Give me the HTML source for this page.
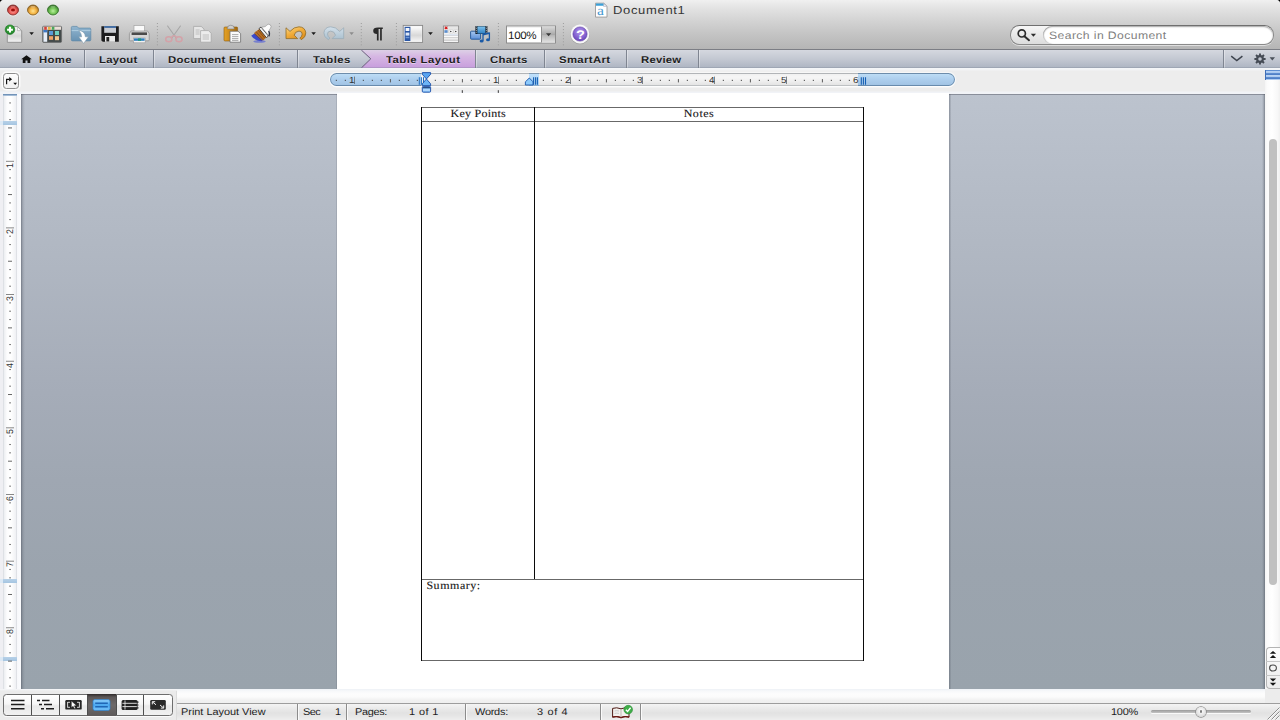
<!DOCTYPE html>
<html><head><meta charset="utf-8"><title>Document1</title>
<style>
html,body{margin:0;padding:0;width:1280px;height:720px;overflow:hidden;background:#000;font-family:"Liberation Sans",sans-serif}
div,svg,span.t{position:absolute}
span.t{white-space:pre;transform-origin:0 0;text-rendering:geometricPrecision}
#win{left:0;top:0;width:1280px;height:720px;overflow:hidden;border-radius:4px 4px 0 0;background:#ededed}
#titlebar{left:0;top:0;width:1280px;height:49px;background:linear-gradient(#f0f0f0 0,#e3e3e3 8px,#d4d4d4 20px,#c4c4c4 34px,#b5b5b5 49px)}
#tbline{left:0;top:49px;width:1280px;height:1px;background:#7c7e85}
#tabs{left:0;top:50px;width:1280px;height:18px;background:linear-gradient(#d5d8df 0,#c3c8d2 50%,#adb4c2 100%)}
.tdiv{top:50px;width:1px;height:18px;background:#7f8591;box-shadow:1px 0 0 rgba(255,255,255,.35)}
#rulerbg{left:0;top:68px;width:1280px;height:26px;background:linear-gradient(#f4f6f9 0,#f2f3f5 2px,#ededed 3px,#ededed 23px,#f1f3f7 24px,#f1f3f7 26px)}
</style></head><body><div id="win">
<div id="titlebar"></div><div id="tbline"></div>
<svg style="left:0;top:0" width="80" height="22" viewBox="0 0 80 22">
<defs>
<radialGradient id="gr" cx=".5" cy=".6" r=".56"><stop offset="0" stop-color="#ffa7a2"/><stop offset=".5" stop-color="#f0645e"/><stop offset=".82" stop-color="#c43e3a"/><stop offset="1" stop-color="#7e2624"/></radialGradient>
<radialGradient id="gy" cx=".5" cy=".6" r=".56"><stop offset="0" stop-color="#ffe392"/><stop offset=".5" stop-color="#f5b748"/><stop offset=".82" stop-color="#cb8d2c"/><stop offset="1" stop-color="#7c5416"/></radialGradient>
<radialGradient id="gg" cx=".5" cy=".6" r=".56"><stop offset="0" stop-color="#b9f09e"/><stop offset=".5" stop-color="#78c85a"/><stop offset=".82" stop-color="#4f9c3c"/><stop offset="1" stop-color="#2c6222"/></radialGradient>
</defs>
<circle cx="13" cy="10.700" r="5.900" fill="rgba(255,255,255,.5)"/><circle cx="33" cy="10.700" r="5.900" fill="rgba(255,255,255,.5)"/><circle cx="53" cy="10.700" r="5.900" fill="rgba(255,255,255,.5)"/>
<ellipse cx="13" cy="10" rx="5.500" ry="5" fill="url(#gr)" stroke="#8a3230" stroke-width=".9"/>
<ellipse cx="33" cy="10" rx="5.500" ry="5" fill="url(#gy)" stroke="#8c6424" stroke-width=".9"/>
<ellipse cx="53" cy="10" rx="5.500" ry="5" fill="url(#gg)" stroke="#3a742e" stroke-width=".9"/>
<ellipse cx="13" cy="10" rx="2" ry="1.500" fill="#9c0c0a"/>
<ellipse cx="13" cy="6.800" rx="2.600" ry="1" fill="rgba(255,255,255,.22)"/><ellipse cx="33" cy="6.800" rx="2.600" ry="1" fill="rgba(255,255,255,.25)"/><ellipse cx="53" cy="6.800" rx="2.600" ry="1" fill="rgba(255,255,255,.2)"/>
</svg>
<svg style="left:594px;top:2px" width="15" height="17" viewBox="0 0 15 17">
<path d="M1.5 1.2h8.3l3.2 3v10.9h-11.5z" fill="#fff" stroke="#9a9a9a" stroke-width=".9"/>
<path d="M2 1.6h7.6l1.2 1.2v.9h-8.8z" fill="#3aa0d8"/>
<path d="M9.6 1.4l3.3 3.1h-3.3z" fill="#e8eef4" stroke="#aab" stroke-width=".5"/>
</svg>
<span class="t" style="left:597.3px;top:5.06px;font:400 14.5px/14.5px 'Liberation Serif',serif;color:#4496cf;transform:scale(1.08,0.9255);">a</span>
<span class="t" style="left:612.8px;top:5.49px;font:400 12.4px/12.4px 'Liberation Sans',sans-serif;color:#363636;letter-spacing:0.630px;transform:scale(1.05,0.9255);">Document1</span>
<div id="tabs"></div>
<svg style="left:355px;top:50px" width="125" height="18" viewBox="355 50 125 18">
<defs><linearGradient id="pur" x1="0" y1="0" x2="0" y2="1"><stop offset="0" stop-color="#ddd0e6"/><stop offset=".35" stop-color="#d6b7e3"/><stop offset="1" stop-color="#c79ddd"/></linearGradient></defs>
<path d="M361.3 50H475.5V68H361.3L370.8 58.8Z" fill="url(#pur)"/>
<path d="M361.3 50L370.8 58.8L361.3 68" fill="none" stroke="#6b5f7d" stroke-width="1"/>
</svg>
<div class="tdiv" style="left:84.0px"></div>
<div class="tdiv" style="left:152.5px"></div>
<div class="tdiv" style="left:297.0px"></div>
<div class="tdiv" style="left:474.5px"></div>
<div class="tdiv" style="left:543.5px"></div>
<div class="tdiv" style="left:625.5px"></div>
<div class="tdiv" style="left:697.5px"></div>
<div class="tdiv" style="left:1223.0px"></div>
<div style="left:0;top:67px;width:1280px;height:1px;background:rgba(120,128,145,.28)"></div>
<svg style="left:21px;top:54.600px" width="11" height="8.500" viewBox="0 0 12 11" preserveAspectRatio="none"><path d="M6 .2L.2 5.600h1.700v5.200h3V7.200h2.200v3.600h3V5.600h1.700z" fill="#111"/></svg>
<span class="t" style="left:38.7px;top:56.00px;font:700 10.6px/10.6px 'Liberation Sans',sans-serif;color:#1e1e1e;letter-spacing:0.328px;transform:scale(1.07,0.9255);text-shadow:0 1px 0 rgba(255,255,255,.45);">Home</span>
<span class="t" style="left:99.2px;top:56.00px;font:700 10.6px/10.6px 'Liberation Sans',sans-serif;color:#1e1e1e;letter-spacing:0.192px;transform:scale(1.07,0.9255);text-shadow:0 1px 0 rgba(255,255,255,.45);">Layout</span>
<span class="t" style="left:168.2px;top:56.00px;font:700 10.6px/10.6px 'Liberation Sans',sans-serif;color:#1e1e1e;letter-spacing:0.243px;transform:scale(1.07,0.9255);text-shadow:0 1px 0 rgba(255,255,255,.45);">Document Elements</span>
<span class="t" style="left:312.8px;top:56.00px;font:700 10.6px/10.6px 'Liberation Sans',sans-serif;color:#1e1e1e;letter-spacing:0.424px;transform:scale(1.07,0.9255);text-shadow:0 1px 0 rgba(255,255,255,.45);">Tables</span>
<span class="t" style="left:386.2px;top:56.00px;font:700 10.6px/10.6px 'Liberation Sans',sans-serif;color:#1e1e1e;letter-spacing:0.414px;transform:scale(1.07,0.9255);text-shadow:0 1px 0 rgba(255,255,255,.45);">Table Layout</span>
<span class="t" style="left:490.2px;top:56.00px;font:700 10.6px/10.6px 'Liberation Sans',sans-serif;color:#1e1e1e;letter-spacing:0.279px;transform:scale(1.07,0.9255);text-shadow:0 1px 0 rgba(255,255,255,.45);">Charts</span>
<span class="t" style="left:559.2px;top:56.00px;font:700 10.6px/10.6px 'Liberation Sans',sans-serif;color:#1e1e1e;letter-spacing:0.337px;transform:scale(1.07,0.9255);text-shadow:0 1px 0 rgba(255,255,255,.45);">SmartArt</span>
<span class="t" style="left:641.2px;top:56.00px;font:700 10.6px/10.6px 'Liberation Sans',sans-serif;color:#1e1e1e;letter-spacing:0.207px;transform:scale(1.07,0.9255);text-shadow:0 1px 0 rgba(255,255,255,.45);">Review</span>
<svg style="left:1226px;top:50px" width="54" height="18" viewBox="1226 50 54 18">
<path d="M1231.2 56.2l5.6 4.3 5.6-4.3" fill="none" stroke="#3e444e" stroke-width="1.5"/>
<g fill="#454b55"><circle cx="1260" cy="59" r="3.9"/>
<g stroke="#454b55" stroke-width="1.9"><path d="M1260 53.4v11.2M1254.4 59h11.2M1256 55l8 8M1264 55l-8 8"/></g></g>
<circle cx="1260" cy="59" r="1.8" fill="#c0c5cf"/>
<path d="M1269.6 57.3h5.4l-2.7 3.2z" fill="#4a505a"/>
</svg>
<svg style="left:0;top:20px" width="1000" height="29" viewBox="0 20 1000 29">
<defs>
<linearGradient id="pg" x1="0" y1="0" x2="0" y2="1"><stop offset="0" stop-color="#fdfdfd"/><stop offset=".6" stop-color="#d8d8d8"/><stop offset="1" stop-color="#f4f4f4"/></linearGradient>
<radialGradient id="grn" cx=".5" cy=".4" r=".6"><stop offset="0" stop-color="#58c04c"/><stop offset="1" stop-color="#177a25"/></radialGradient>
<linearGradient id="fold" x1="0" y1="0" x2="0" y2="1"><stop offset="0" stop-color="#92b6d0"/><stop offset="1" stop-color="#6892b2"/></linearGradient>
<linearGradient id="und" x1="0" y1="0" x2=".6" y2="1"><stop offset="0" stop-color="#fbdc92"/><stop offset=".5" stop-color="#f2ae3c"/><stop offset="1" stop-color="#de8f1e"/></linearGradient>
<linearGradient id="red" x1="0" y1="0" x2="0" y2="1"><stop offset="0" stop-color="#d3e0ea"/><stop offset="1" stop-color="#a9bfce"/></linearGradient>
<linearGradient id="clip" x1="0" y1="0" x2="1" y2="0"><stop offset="0" stop-color="#e4a228"/><stop offset=".5" stop-color="#c98716"/><stop offset="1" stop-color="#a0650c"/></linearGradient>
<radialGradient id="hlp" cx=".5" cy=".35" r=".7"><stop offset="0" stop-color="#b49aee"/><stop offset=".6" stop-color="#8462d0"/><stop offset="1" stop-color="#6440b4"/></radialGradient>
<linearGradient id="cmb" x1="0" y1="0" x2="0" y2="1"><stop offset="0" stop-color="#d9d9d9"/><stop offset=".5" stop-color="#a9a9a9"/><stop offset=".55" stop-color="#b7b7b7"/><stop offset="1" stop-color="#e2e2e2"/></linearGradient>
<linearGradient id="film" x1="0" y1="0" x2="0" y2="1"><stop offset="0" stop-color="#7ec3ee"/><stop offset="1" stop-color="#2f7fc2"/></linearGradient>
<linearGradient id="blu" x1="0" y1="0" x2="0" y2="1"><stop offset="0" stop-color="#a9c8ee"/><stop offset="1" stop-color="#5b8fd8"/></linearGradient>
</defs>
<g><path d="M7.3 26.6h10.2l4.2 4v11.7h-14.4z" fill="url(#pg)" stroke="#8f8f8f" stroke-width=".9"/>
<path d="M17.4 26.7v4h4.2z" fill="#f6f6f6" stroke="#9a9a9a" stroke-width=".6"/>
<circle cx="10" cy="29.700" r="4.800" fill="url(#grn)" stroke="#16761f" stroke-width=".6"/>
<path d="M10 26.800v5.800M7.100 29.700h5.800" stroke="#fff" stroke-width="2"/></g>
<path d="M29.3 32.2h4.6l-2.3 2.9z" fill="#1a1a1a"/>
<g><rect x="42.600" y="26.200" width="19" height="16.200" rx="1.200" fill="#434a4a" stroke="#6b6b6b" stroke-width=".7"/>
<rect x="43.2" y="26.6" width="17.8" height="3.2" fill="#e9ded6"/>
<rect x="44.2" y="26.8" width="2.6" height="3" fill="#d2433c"/><rect x="48" y="26.8" width="2.6" height="3" fill="#e3b24a"/><rect x="51.8" y="26.8" width="2.6" height="3" fill="#4aa85a"/>
<rect x="43.4" y="30" width="3.8" height="11.8" fill="#e8eef8"/><rect x="43.4" y="30" width="3.8" height="2.4" fill="#3f78c4"/>
<rect x="49" y="31" width="4" height="4" fill="#5b9bd8"/><rect x="55" y="31" width="4" height="4" fill="#6fd0c0"/>
<rect x="49" y="36.2" width="4" height="3.6" fill="#f0a368"/><rect x="55" y="36.2" width="4" height="4" fill="#f4c890"/></g>
<g><path d="M71.3 27.6q0-1.2 1.2-1.2h4.6l1.5 1.7h11q1.2 0 1.2 1.2v10.4q0 1.2-1.2 1.2h-17.1q-1.2 0-1.2-1.2z" fill="url(#fold)" stroke="#5f8aa8" stroke-width=".7"/>
<path d="M71.6 30.6h19" stroke="#b8d4e6" stroke-width=".8"/>
<path d="M78.800 30.400q6.200.600 6.600 6.400h3.100l-4.900 6.700-4.900-6.700h2.900q-.300-3.600-2.800-6.400z" fill="#fff" stroke="#7f9aac" stroke-width=".6"/></g>
<g><path d="M101.4 26.2h17.4v15.6h-16l-1.4-1.4z" fill="#1c1c1e"/>
<rect x="104.2" y="26.2" width="11.8" height="6.6" fill="#c9ccd2"/><rect x="104.2" y="26.2" width="11.8" height="1.6" fill="#2b5d9c"/>
<rect x="105" y="36" width="10" height="5.8" fill="#e9e9e9"/><rect x="106.4" y="37" width="2.8" height="4.4" fill="#222"/></g>
<g><rect x="134" y="25.6" width="10.6" height="6.6" fill="#fafafa" stroke="#a5a5a5" stroke-width=".7"/>
<path d="M131 31h16.6l1.6 2.6v6.2q0 1-1 1h-17.8q-1 0-1-1v-6.2z" fill="#d6d6d6" stroke="#8c8c8c" stroke-width=".7"/>
<rect x="131.6" y="32.4" width="15.4" height="2.6" fill="#4a4a4a"/>
<rect x="133.4" y="38" width="11.8" height="4.8" fill="#f2f2f2" stroke="#9a9a9a" stroke-width=".6"/>
<rect x="134" y="38.4" width="10.6" height="2.4" fill="#2e7ec0"/><rect x="138" y="38.4" width="3" height="2.4" fill="#1f9a78"/></g>
<path d="M157.4 23v24" stroke="#9c9c9c" stroke-width="1" stroke-dasharray="1 2.050" fill="none"/>
<g fill="none" stroke-linecap="round"><path d="M167.600 26l8.700 12.200M180.400 26l-8.700 12.200" stroke="#a6a6a6" stroke-width="1.100"/>
<ellipse cx="168.800" cy="39.300" rx="3.100" ry="2.500" stroke="#d3a2a8" stroke-width="1.500"/><ellipse cx="179" cy="39.300" rx="3.100" ry="2.500" stroke="#d3a2a8" stroke-width="1.500"/>
<path d="M171.200 37.600l2.200-2M176.800 37.600l-2.200-2" stroke="#d3a2a8" stroke-width="1.300"/></g>
<g stroke="#a8a8a8" stroke-width=".8"><path d="M193.6 26.4h7.6l2.8 2.6v9.6h-10.4z" fill="#e6e6e6"/>
<path d="M200.6 30.6h7.8l2.8 2.6v9h-10.6z" fill="#ececec"/>
<path d="M202.6 35h6.4M202.6 37h6.4M202.6 39h6.4M195.6 30h4M195.6 32h4M195.6 34h4" stroke="#b4b4b4" stroke-width=".8"/></g>
<g><rect x="224" y="27" width="13.6" height="14" rx="1" fill="url(#clip)" stroke="#8b5a10" stroke-width=".6"/>
<path d="M227.4 28.4q0-3.2 3.4-3.2t3.4 3.2v.6h-6.8z" fill="#cfcfcf" stroke="#7b7b7b" stroke-width=".6"/>
<path d="M230 31.2h8l2.6 2.4v8.6h-10.6z" fill="#fbfbfb" stroke="#6f6f6f" stroke-width=".8"/>
<path d="M232 34.600h6.400M232 36.600h6.400M232 38.600h6.400M232 40.400h6.400" stroke="#a2a2a2" stroke-width=".9"/></g>
<g><ellipse cx="259.500" cy="41.400" rx="6.200" ry="1.400" fill="#4a58d8" opacity=".6"/>
<path d="M251.200 35.800q3 4.600 10.200 5.400l3-2-8.400-6.600z" fill="#3a49cc"/>
<path d="M254 33l5.600-4.200 6.800 8.400-3.400 3.200z" fill="#b86f22"/>
<path d="M256 31.600l7 8M258 30l6.800 8.200M254.600 33.800l6.800 6.600" stroke="#7c4412" stroke-width=".7" fill="none"/>
<path d="M259 28.600l7.400 9 2-1.600-7.400-9z" fill="#f2f2f2" stroke="#2a2a2a" stroke-width=".8"/>
<path d="M261.600 27.200l2.400-.4q1.300 0 2.200-1l.9-1q1.600-1.300 3.200.1 1.400 1.500.3 3.200l-.9 1.200q-.8 1.100-.5 2.400l-.8 3.600z" fill="#fcfcfc" stroke="#8d8d8d" stroke-width=".6"/>
<path d="M268.600 31q1.800 2.600.2 5.400" stroke="#30364a" stroke-width="1.200" fill="none"/></g>
<path d="M279.4 23v24" stroke="#9c9c9c" stroke-width="1" stroke-dasharray="1 2.050" fill="none"/>
<path d="M286 27.800L286 38.600L297.600 38.600L294.200 35.200Q295 31.400 299 31.100Q302.300 31.300 302.200 34.100Q302 36.700 299.800 38.100L301.300 39.700Q306 37.200 305.800 32.800Q305 27 299 26.800Q294 26.800 290 31.400Z" fill="url(#und)" stroke="#8f6a24" stroke-width=".8" stroke-linejoin="round"/>
<path d="M311.3 32.2h4.6l-2.3 2.9z" fill="#1a1a1a"/>
<g transform="translate(629.700 0) scale(-1 1)"><path d="M286 27.800L286 38.600L297.600 38.600L294.200 35.200Q295 31.400 299 31.100Q302.300 31.300 302.200 34.100Q302 36.700 299.800 38.100L301.300 39.700Q306 37.200 305.800 32.800Q305 27 299 26.800Q294 26.800 290 31.400Z" fill="url(#red)" stroke="#9aacb8" stroke-width=".8" stroke-linejoin="round"/></g>
<path d="M349.3 32.2h4.6l-2.3 2.9z" fill="#8d8d8d"/>
<path d="M361.3 23v24" stroke="#9c9c9c" stroke-width="1" stroke-dasharray="1 2.050" fill="none"/>
<path d="M378 27.6h4.800v1.300h-1v11.500h-1.700v-11.500h-1.500v11.500h-1.700v-6.300q-3.700-.1-3.700-3.300 0-3.200 4.800-3.200z" fill="#2a2a2a"/>
<path d="M396.4 23v24" stroke="#9c9c9c" stroke-width="1" stroke-dasharray="1 2.050" fill="none"/>
<g><rect x="403.200" y="25.400" width="19.400" height="17" fill="#f3f3f3" stroke="#8a8a8a" stroke-width=".9"/>
<rect x="411" y="26.600" width="10.800" height="14.600" fill="url(#pg)"/>
<rect x="404.600" y="26.800" width="5.800" height="14.200" fill="#2c58a6"/>
<rect x="405.600" y="28" width="3.800" height="3" fill="#f4f7fc"/><rect x="405.600" y="32.600" width="3.800" height="3" fill="#dfe8f6"/><rect x="405.600" y="36.800" width="3.800" height="1.400" fill="#6f97d6"/></g>
<path d="M428.2 32.2h4.6l-2.3 2.9z" fill="#1a1a1a"/>
<g><rect x="443.400" y="26" width="15.200" height="16.400" fill="#fafafa" stroke="#8c8c8c" stroke-width=".9"/>
<rect x="444" y="26.600" width="14" height="6.800" fill="#e6e6e6"/>
<path d="M444.800 26.600l2.600 2.400M447.400 26.600l-2.600 2.400" stroke="#d81e1e" stroke-width="1.100"/>
<rect x="444.400" y="30.200" width="3.200" height="2.600" fill="#5b8fd0"/>
<rect x="449" y="30" width="4" height="3" fill="#fff" stroke="#bbb" stroke-width=".4"/><rect x="454" y="30" width="4" height="3" fill="#fff" stroke="#bbb" stroke-width=".4"/>
<path d="M450.200 30.700l1.800.8-1.800.8zM455.200 30.700l1.800.8-1.800.8z" fill="#222"/>
<path d="M444 35.300h14M444 37.700h14M444 40.100h14" stroke="#c6c6c6" stroke-width="1.100"/><rect x="444" y="34" width="14" height="1.400" fill="#dfe7f2"/></g>
<g><rect x="470.600" y="31.200" width="10" height="8" rx=".8" fill="url(#blu)" stroke="#1f5596" stroke-width=".9"/>
<rect x="475.400" y="26" width="12" height="8" fill="#15202c"/><rect x="477.400" y="26.400" width="8" height="7.200" fill="url(#film)"/>
<path d="M476.400 26.400v7.200M486.400 26.400v7.200" stroke="#e8e8e8" stroke-width=".7" stroke-dasharray=".9 .9"/>
<path d="M483 33.400v7.400M489.400 32.400v7" stroke="#1b5aa6" stroke-width="1.300"/><path d="M483 33.600l6.400-1.400v1.800l-6.400 1.400z" fill="#1b5aa6"/>
<ellipse cx="481.600" cy="41" rx="2" ry="1.500" fill="#1b5aa6"/><ellipse cx="488" cy="39.800" rx="2" ry="1.500" fill="#1b5aa6"/></g>
<path d="M498.4 23v24" stroke="#9c9c9c" stroke-width="1" stroke-dasharray="1 2.050" fill="none"/>
<g><rect x="506.500" y="26" width="49" height="17" fill="#fff" stroke="#8d8d8d" stroke-width="1"/>
<rect x="541.500" y="26.500" width="13.500" height="16" fill="url(#cmb)"/><path d="M541.500 26.500v16" stroke="#8f8f8f" stroke-width="1"/>
<path d="M507 26.800h34" stroke="#c9c9c9" stroke-width=".8"/></g>
<path d="M546.0 33.2h5.2l-2.6 3.1z" fill="#3a3a3a"/>
<path d="M563.4 23v24" stroke="#9c9c9c" stroke-width="1" stroke-dasharray="1 2.050" fill="none"/>
<g><circle cx="580" cy="34.600" r="9.700" fill="#8e8e8e" opacity=".5"/><circle cx="580" cy="34" r="9.400" fill="#f8f8f8"/><circle cx="580" cy="34" r="7.100" fill="url(#hlp)" stroke="#5a3aa6" stroke-width=".6"/></g>
</svg>
<span class="t" style="left:508.1px;top:30.91px;font:400 11.6px/11.6px 'Liberation Sans',sans-serif;color:#1a1a1a;letter-spacing:-0.414px;transform:scale(1.0,0.9255);">100%</span>
<span class="t" style="left:575.9px;top:29.42px;font:700 13.5px/13.5px 'Liberation Sans',sans-serif;color:#fff;transform:scale(1.08,0.9255);">?</span>
<div style="left:1010px;top:25px;width:262px;height:18px;border-radius:9.5px;border:1px solid #8a8a8a;border-top-color:#6f6f6f;background:linear-gradient(#f6f6f6,#dcdcdc);box-shadow:0 1px 0 rgba(255,255,255,.55)"></div>
<div style="left:1042.500px;top:26px;width:230px;height:18px;border-radius:9px;background:#fff;box-shadow:inset 0 1px 1.500px rgba(0,0,0,.35),inset 1px 0 1px rgba(0,0,0,.18)"></div>
<svg style="left:1012px;top:26px" width="30" height="18" viewBox="1012 26 30 18">
<circle cx="1021.800" cy="33.400" r="3.600" fill="none" stroke="#2c2c2c" stroke-width="1.700"/><path d="M1024.400 36.200l4.600 4" stroke="#2c2c2c" stroke-width="2" stroke-linecap="round"/>
<path d="M1030.800 33.800h5.200l-2.600 2.900z" fill="#2c2c2c"/></svg>
<span class="t" style="left:1049.2px;top:31.01px;font:400 11.6px/11.6px 'Liberation Sans',sans-serif;color:#808080;letter-spacing:0.386px;transform:scale(1.05,0.9255);">Search in Document</span>
<div id="rulerbg"></div>
<div style="left:3px;top:73px;width:14px;height:14px;border:1px solid #8e8e8e;border-radius:3.500px;background:linear-gradient(#fdfdfd,#f1f1f1);box-shadow:0 0 0 1.500px rgba(255,255,255,.8)"></div>
<svg style="left:3px;top:73px" width="16" height="16" viewBox="0 0 16 16"><path d="M3.600 11.200V6.400h2.800" fill="none" stroke="#111" stroke-width="1.200"/><path d="M6.200 3.900l2.900 2.400-2.900 2.200z" fill="#111"/><path d="M10.300 9.800h3.800l-1.900 2.200z" fill="#111"/></svg>
<div style="left:330px;top:73px;width:625px;height:13px;border-radius:6.500px;overflow:hidden;background:linear-gradient(#e6e6e6 0,#f1f1f1 1.500px,#f6f6f6 4px,#efefef 8px,#e4e4e4 12px,#dcdcdc 13px);box-shadow:0 0 0 1.200px rgba(255,255,255,.55),0 1.500px 0 rgba(255,255,255,.7)">
<div style="left:0;top:0;width:91px;height:13px;background:linear-gradient(#c4e1f8 0,#badaf4 2px,#aecfee 6px,#a4c6e6 11px,#9fc0e0 13px)"></div>
<div style="left:528px;top:0;width:97px;height:13px;background:linear-gradient(#c4e1f8 0,#badaf4 2px,#aecfee 6px,#a4c6e6 11px,#9fc0e0 13px)"></div>
<div style="left:199px;top:0;width:10px;height:13px;background:linear-gradient(#9ab8d4 0,#bfe0fb 1.500px,#a6cff3 12px,#a0c4e6 13px)"></div>
<div style="left:0;top:0;width:625px;height:13px;box-sizing:border-box;border-radius:6.500px;border:1px solid rgba(60,70,80,.2);border-top-color:rgba(50,60,70,.3)"></div>
<div style="left:0;top:0;width:91px;height:13px;box-sizing:border-box;border-radius:6.500px 0 0 6.500px;border:1px solid rgba(70,110,150,.5);border-right:none"></div>
<div style="left:528px;top:0;width:97px;height:13px;box-sizing:border-box;border-radius:0 6.500px 6.500px 0;border:1px solid rgba(70,110,150,.5);border-left:none"></div>
</div>
<svg style="left:326px;top:70px" width="634" height="24" viewBox="326 70 634 24"><rect x="335.8" y="79.800" width="1.100" height="1.100" fill="#444"/><rect x="344.8" y="79.800" width="1.100" height="1.100" fill="#444"/><rect x="362.8" y="79.800" width="1.100" height="1.100" fill="#444"/><rect x="371.8" y="79.800" width="1.100" height="1.100" fill="#444"/><rect x="380.8" y="79.800" width="1.100" height="1.100" fill="#444"/><rect x="389.9" y="79.100" width="1" height="3.300" fill="#5a5a5a"/><rect x="398.8" y="79.800" width="1.100" height="1.100" fill="#444"/><rect x="407.8" y="79.800" width="1.100" height="1.100" fill="#444"/><rect x="416.8" y="79.800" width="1.100" height="1.100" fill="#444"/><rect x="434.8" y="79.800" width="1.100" height="1.100" fill="#444"/><rect x="443.8" y="79.800" width="1.100" height="1.100" fill="#444"/><rect x="452.8" y="79.800" width="1.100" height="1.100" fill="#444"/><rect x="461.9" y="79.100" width="1" height="3.300" fill="#5a5a5a"/><rect x="470.8" y="79.800" width="1.100" height="1.100" fill="#444"/><rect x="479.8" y="79.800" width="1.100" height="1.100" fill="#444"/><rect x="488.8" y="79.800" width="1.100" height="1.100" fill="#444"/><rect x="506.8" y="79.800" width="1.100" height="1.100" fill="#444"/><rect x="515.8" y="79.800" width="1.100" height="1.100" fill="#444"/><rect x="542.8" y="79.800" width="1.100" height="1.100" fill="#444"/><rect x="551.8" y="79.800" width="1.100" height="1.100" fill="#444"/><rect x="560.8" y="79.800" width="1.100" height="1.100" fill="#444"/><rect x="578.8" y="79.800" width="1.100" height="1.100" fill="#444"/><rect x="587.8" y="79.800" width="1.100" height="1.100" fill="#444"/><rect x="596.8" y="79.800" width="1.100" height="1.100" fill="#444"/><rect x="605.9" y="79.100" width="1" height="3.300" fill="#5a5a5a"/><rect x="614.8" y="79.800" width="1.100" height="1.100" fill="#444"/><rect x="623.8" y="79.800" width="1.100" height="1.100" fill="#444"/><rect x="632.8" y="79.800" width="1.100" height="1.100" fill="#444"/><rect x="650.8" y="79.800" width="1.100" height="1.100" fill="#444"/><rect x="659.8" y="79.800" width="1.100" height="1.100" fill="#444"/><rect x="668.8" y="79.800" width="1.100" height="1.100" fill="#444"/><rect x="677.9" y="79.100" width="1" height="3.300" fill="#5a5a5a"/><rect x="686.8" y="79.800" width="1.100" height="1.100" fill="#444"/><rect x="695.8" y="79.800" width="1.100" height="1.100" fill="#444"/><rect x="704.8" y="79.800" width="1.100" height="1.100" fill="#444"/><rect x="722.8" y="79.800" width="1.100" height="1.100" fill="#444"/><rect x="731.8" y="79.800" width="1.100" height="1.100" fill="#444"/><rect x="740.8" y="79.800" width="1.100" height="1.100" fill="#444"/><rect x="749.9" y="79.100" width="1" height="3.300" fill="#5a5a5a"/><rect x="758.8" y="79.800" width="1.100" height="1.100" fill="#444"/><rect x="767.8" y="79.800" width="1.100" height="1.100" fill="#444"/><rect x="776.8" y="79.800" width="1.100" height="1.100" fill="#444"/><rect x="794.8" y="79.800" width="1.100" height="1.100" fill="#444"/><rect x="803.8" y="79.800" width="1.100" height="1.100" fill="#444"/><rect x="812.8" y="79.800" width="1.100" height="1.100" fill="#444"/><rect x="821.9" y="79.100" width="1" height="3.300" fill="#5a5a5a"/><rect x="830.8" y="79.800" width="1.100" height="1.100" fill="#444"/><rect x="839.8" y="79.800" width="1.100" height="1.100" fill="#444"/><rect x="848.8" y="79.800" width="1.100" height="1.100" fill="#444"/><rect x="354.1" y="76.600" width=".8" height="7.400" fill="#666"/><rect x="498.1" y="76.600" width=".8" height="7.400" fill="#666"/><rect x="570.1" y="76.600" width=".8" height="7.400" fill="#666"/><rect x="642.1" y="76.600" width=".8" height="7.400" fill="#666"/><rect x="714.1" y="76.600" width=".8" height="7.400" fill="#666"/><rect x="786.1" y="76.600" width=".8" height="7.400" fill="#666"/><rect x="461.8" y="90.200" width="1" height="2.700" fill="#3a3a3a"/><rect x="497.8" y="90.200" width="1" height="2.700" fill="#3a3a3a"/><g stroke="#1f6fc4" stroke-width="1"><path d="M419.300 77.200v7.600M421.400 77.200v7.600M423.500 77.200v7.600"/></g><g stroke="#1d4fa8" stroke-width=".9" stroke-linejoin="round">
<path d="M422.300 72.600h8.300v1.700l-4.150 4.700-4.150-4.700z" fill="#5aa5f0"/>
<path d="M422.300 85.700v-1.900l4.150-4.800 4.150 4.800v1.900z" fill="#6db4f6"/>
<rect x="422.300" y="86.400" width="8.300" height="5.800" rx="1" fill="#8cc6fb"/>
<path d="M422.600 87.600h7.700" stroke="#2a4f86" stroke-width="1.400"/><path d="M423 90h7" stroke="#cfe8ff" stroke-width="1"/></g><g stroke="#1660b4" stroke-width="1.100"><path d="M533.600 77.200v7.600M535.600 77.200v7.600M537.400 77.200v7.600"/></g><path d="M525.400 85v-3.200l3.900-3.800 3.700 3.800v3.200z" fill="#8ccafc" stroke="#1d58ac" stroke-width=".9" stroke-linejoin="round"/><g stroke="#1660b4" stroke-width="1.100"><path d="M861.300 77.200v7.600M863.400 77.200v7.600M865.500 77.200v7.600"/></g></svg>
<span class="t" style="left:348.7px;top:77.46px;font:400 9.5px/9.5px 'Liberation Sans',sans-serif;color:#333;transform:scale(1.05,0.9255);">1</span>
<span class="t" style="left:492.7px;top:77.46px;font:400 9.5px/9.5px 'Liberation Sans',sans-serif;color:#333;transform:scale(1.05,0.9255);">1</span>
<span class="t" style="left:564.6999999999999px;top:77.46px;font:400 9.5px/9.5px 'Liberation Sans',sans-serif;color:#333;transform:scale(1.05,0.9255);">2</span>
<span class="t" style="left:636.6999999999999px;top:77.46px;font:400 9.5px/9.5px 'Liberation Sans',sans-serif;color:#333;transform:scale(1.05,0.9255);">3</span>
<span class="t" style="left:708.6999999999999px;top:77.46px;font:400 9.5px/9.5px 'Liberation Sans',sans-serif;color:#333;transform:scale(1.05,0.9255);">4</span>
<span class="t" style="left:780.6999999999999px;top:77.46px;font:400 9.5px/9.5px 'Liberation Sans',sans-serif;color:#333;transform:scale(1.05,0.9255);">5</span>
<span class="t" style="left:852.6999999999999px;top:77.46px;font:400 9.5px/9.5px 'Liberation Sans',sans-serif;color:#333;transform:scale(1.05,0.9255);">6</span>
<div style="left:0;top:94px;width:22px;height:595px;background:linear-gradient(90deg,#efeff3 0,#efeff3 3px,#fafbfd 3px,#f6f7fa 17px,#f7f8fb 17px,#fbfcfe 21px)"></div>
<div style="left:3px;top:94px;width:14px;height:595px;background:linear-gradient(90deg,#cfd3d9 0,#eceef1 1px,#fcfcfd 4px,#ffffff 8px,#f1f2f5 12.500px,#d6d9de 14px)"></div>
<div style="left:3px;top:94px;width:14px;height:1.800px;background:linear-gradient(#6486ae 0,#7f9fc2 50%,#c8daec 100%)"></div>
<div style="left:0;top:121.3px;width:4px;height:3.700px;background:#dce9f5"></div><div style="left:3px;top:121.3px;width:14px;height:3.700px;background:linear-gradient(#b7d1e8,#a5c5e1)"></div>
<div style="left:0;top:579.2px;width:4px;height:3.700px;background:#dce9f5"></div><div style="left:3px;top:579.2px;width:14px;height:3.700px;background:linear-gradient(#b7d1e8,#a5c5e1)"></div>
<div style="left:0;top:657.2px;width:4px;height:3.700px;background:#dce9f5"></div><div style="left:3px;top:657.2px;width:14px;height:3.700px;background:linear-gradient(#b7d1e8,#a5c5e1)"></div>
<svg style="left:0;top:94px" width="22" height="595" viewBox="0 94 22 595"><rect x="9.400" y="102.38" width="1.300" height="1.100" fill="#4a4a4a"/><rect x="9.400" y="110.71" width="1.300" height="1.100" fill="#4a4a4a"/><rect x="9.400" y="119.04" width="1.300" height="1.100" fill="#4a4a4a"/><rect x="8" y="127.42" width="4" height="1" fill="#666"/><rect x="9.400" y="135.71" width="1.300" height="1.100" fill="#4a4a4a"/><rect x="9.400" y="144.04" width="1.300" height="1.100" fill="#4a4a4a"/><rect x="9.400" y="152.37" width="1.300" height="1.100" fill="#4a4a4a"/><rect x="6" y="160.85" width="8" height=".8" fill="#6a6a6a"/><rect x="9.400" y="169.03" width="1.300" height="1.100" fill="#4a4a4a"/><rect x="9.400" y="177.36" width="1.300" height="1.100" fill="#4a4a4a"/><rect x="9.400" y="185.69" width="1.300" height="1.100" fill="#4a4a4a"/><rect x="8" y="194.07" width="4" height="1" fill="#666"/><rect x="9.400" y="202.36" width="1.300" height="1.100" fill="#4a4a4a"/><rect x="9.400" y="210.69" width="1.300" height="1.100" fill="#4a4a4a"/><rect x="9.400" y="219.02" width="1.300" height="1.100" fill="#4a4a4a"/><rect x="6" y="227.50" width="8" height=".8" fill="#6a6a6a"/><rect x="9.400" y="235.68" width="1.300" height="1.100" fill="#4a4a4a"/><rect x="9.400" y="244.01" width="1.300" height="1.100" fill="#4a4a4a"/><rect x="9.400" y="252.34" width="1.300" height="1.100" fill="#4a4a4a"/><rect x="8" y="260.73" width="4" height="1" fill="#666"/><rect x="9.400" y="269.01" width="1.300" height="1.100" fill="#4a4a4a"/><rect x="9.400" y="277.34" width="1.300" height="1.100" fill="#4a4a4a"/><rect x="9.400" y="285.67" width="1.300" height="1.100" fill="#4a4a4a"/><rect x="6" y="294.15" width="8" height=".8" fill="#6a6a6a"/><rect x="9.400" y="302.33" width="1.300" height="1.100" fill="#4a4a4a"/><rect x="9.400" y="310.66" width="1.300" height="1.100" fill="#4a4a4a"/><rect x="9.400" y="318.99" width="1.300" height="1.100" fill="#4a4a4a"/><rect x="8" y="327.38" width="4" height="1" fill="#666"/><rect x="9.400" y="335.66" width="1.300" height="1.100" fill="#4a4a4a"/><rect x="9.400" y="343.99" width="1.300" height="1.100" fill="#4a4a4a"/><rect x="9.400" y="352.32" width="1.300" height="1.100" fill="#4a4a4a"/><rect x="6" y="360.80" width="8" height=".8" fill="#6a6a6a"/><rect x="9.400" y="368.98" width="1.300" height="1.100" fill="#4a4a4a"/><rect x="9.400" y="377.31" width="1.300" height="1.100" fill="#4a4a4a"/><rect x="9.400" y="385.64" width="1.300" height="1.100" fill="#4a4a4a"/><rect x="8" y="394.02" width="4" height="1" fill="#666"/><rect x="9.400" y="402.31" width="1.300" height="1.100" fill="#4a4a4a"/><rect x="9.400" y="410.64" width="1.300" height="1.100" fill="#4a4a4a"/><rect x="9.400" y="418.97" width="1.300" height="1.100" fill="#4a4a4a"/><rect x="6" y="427.45" width="8" height=".8" fill="#6a6a6a"/><rect x="9.400" y="435.63" width="1.300" height="1.100" fill="#4a4a4a"/><rect x="9.400" y="443.96" width="1.300" height="1.100" fill="#4a4a4a"/><rect x="9.400" y="452.29" width="1.300" height="1.100" fill="#4a4a4a"/><rect x="8" y="460.68" width="4" height="1" fill="#666"/><rect x="9.400" y="468.96" width="1.300" height="1.100" fill="#4a4a4a"/><rect x="9.400" y="477.29" width="1.300" height="1.100" fill="#4a4a4a"/><rect x="9.400" y="485.62" width="1.300" height="1.100" fill="#4a4a4a"/><rect x="6" y="494.10" width="8" height=".8" fill="#6a6a6a"/><rect x="9.400" y="502.28" width="1.300" height="1.100" fill="#4a4a4a"/><rect x="9.400" y="510.61" width="1.300" height="1.100" fill="#4a4a4a"/><rect x="9.400" y="518.94" width="1.300" height="1.100" fill="#4a4a4a"/><rect x="8" y="527.33" width="4" height="1" fill="#666"/><rect x="9.400" y="535.61" width="1.300" height="1.100" fill="#4a4a4a"/><rect x="9.400" y="543.94" width="1.300" height="1.100" fill="#4a4a4a"/><rect x="9.400" y="552.27" width="1.300" height="1.100" fill="#4a4a4a"/><rect x="6" y="560.75" width="8" height=".8" fill="#6a6a6a"/><rect x="9.400" y="568.93" width="1.300" height="1.100" fill="#4a4a4a"/><rect x="9.400" y="577.26" width="1.300" height="1.100" fill="#4a4a4a"/><rect x="9.400" y="585.59" width="1.300" height="1.100" fill="#4a4a4a"/><rect x="8" y="593.98" width="4" height="1" fill="#666"/><rect x="9.400" y="602.26" width="1.300" height="1.100" fill="#4a4a4a"/><rect x="9.400" y="610.59" width="1.300" height="1.100" fill="#4a4a4a"/><rect x="9.400" y="618.92" width="1.300" height="1.100" fill="#4a4a4a"/><rect x="6" y="627.40" width="8" height=".8" fill="#6a6a6a"/><rect x="9.400" y="635.58" width="1.300" height="1.100" fill="#4a4a4a"/><rect x="9.400" y="643.91" width="1.300" height="1.100" fill="#4a4a4a"/><rect x="9.400" y="652.24" width="1.300" height="1.100" fill="#4a4a4a"/><rect x="8" y="660.63" width="4" height="1" fill="#666"/><rect x="9.400" y="668.91" width="1.300" height="1.100" fill="#4a4a4a"/><rect x="9.400" y="677.24" width="1.300" height="1.100" fill="#4a4a4a"/><rect x="9.400" y="685.57" width="1.300" height="1.100" fill="#4a4a4a"/></svg>
<span class="t" style="left:6px;top:167.55px;font:400 9.500px/9.500px 'Liberation Sans',sans-serif;color:#333;transform:rotate(-90deg) scaleX(0.9255)">1</span>
<span class="t" style="left:6px;top:234.20px;font:400 9.500px/9.500px 'Liberation Sans',sans-serif;color:#333;transform:rotate(-90deg) scaleX(0.9255)">2</span>
<span class="t" style="left:6px;top:300.85px;font:400 9.500px/9.500px 'Liberation Sans',sans-serif;color:#333;transform:rotate(-90deg) scaleX(0.9255)">3</span>
<span class="t" style="left:6px;top:367.50px;font:400 9.500px/9.500px 'Liberation Sans',sans-serif;color:#333;transform:rotate(-90deg) scaleX(0.9255)">4</span>
<span class="t" style="left:6px;top:434.15px;font:400 9.500px/9.500px 'Liberation Sans',sans-serif;color:#333;transform:rotate(-90deg) scaleX(0.9255)">5</span>
<span class="t" style="left:6px;top:500.80px;font:400 9.500px/9.500px 'Liberation Sans',sans-serif;color:#333;transform:rotate(-90deg) scaleX(0.9255)">6</span>
<span class="t" style="left:6px;top:567.45px;font:400 9.500px/9.500px 'Liberation Sans',sans-serif;color:#333;transform:rotate(-90deg) scaleX(0.9255)">7</span>
<span class="t" style="left:6px;top:634.10px;font:400 9.500px/9.500px 'Liberation Sans',sans-serif;color:#333;transform:rotate(-90deg) scaleX(0.9255)">8</span>
<div style="left:21px;top:94px;width:1244px;height:595px;background:linear-gradient(#bcc3ce 0,#b1b8c3 25%,#a5acb8 50%,#9fa7b2 65%,#9ba4ae 80%,#99a3ac 100%)"></div>
<div style="left:21px;top:94px;width:1244px;height:1px;background:rgba(120,124,136,.75)"></div>
<div style="left:21px;top:94px;width:4px;height:595px;background:linear-gradient(90deg,rgba(80,86,98,.62),rgba(90,96,108,.2) 45%,rgba(90,96,108,0))"></div>
<div style="left:1262px;top:94px;width:3px;height:595px;background:linear-gradient(90deg,rgba(90,96,108,0),rgba(90,96,108,.22) 45%,rgba(84,90,100,.6))"></div>
<div style="left:337px;top:93px;width:612px;height:596px;background:#fff"></div>
<div style="left:949px;top:94px;width:2px;height:595px;background:linear-gradient(90deg,rgba(90,96,108,.5),rgba(90,96,108,.1))"></div>
<div style="left:335.500px;top:94px;width:1.500px;height:595px;background:rgba(90,96,108,.18)"></div>
<div style="left:421px;top:107.2px;width:443px;height:1.1px;background:#686868"></div><div style="left:421px;top:120.9px;width:443px;height:1.1px;background:#686868"></div><div style="left:421px;top:579px;width:443px;height:1.1px;background:#686868"></div><div style="left:421px;top:660px;width:443px;height:1.1px;background:#686868"></div>
<div style="left:421px;top:107.2px;width:1px;height:553.8px;background:#0a0a0a"></div><div style="left:863px;top:107.2px;width:1px;height:553.8px;background:#0a0a0a"></div><div style="left:534px;top:107.2px;width:1px;height:472.3px;background:#0a0a0a"></div>
<span class="t" style="left:450.5px;top:108.00px;font:400 12px/12px 'Liberation Serif',serif;color:#161616;letter-spacing:0.248px;transform:scale(1.0,0.9255);-webkit-text-stroke:.12px #161616;">Key Points</span>
<span class="t" style="left:683.7px;top:108.00px;font:400 12px/12px 'Liberation Serif',serif;color:#161616;letter-spacing:0.520px;transform:scale(1.0,0.9255);-webkit-text-stroke:.12px #161616;">Notes</span>
<span class="t" style="left:426.4px;top:580.30px;font:400 12px/12px 'Liberation Serif',serif;color:#161616;letter-spacing:0.537px;transform:scale(1.0,0.9255);-webkit-text-stroke:.12px #161616;">Summary:</span>
<div style="left:1265px;top:70px;width:15px;height:619px;background:linear-gradient(90deg,#f4f4f4 0,#fbfbfb 2px,#ffffff 7px,#f7f7f7 13px,#f0f0f0 15px)"></div>
<div style="left:1269px;top:139px;width:8px;height:445.500px;border-radius:4px;background:#c1c1c1"></div>
<div style="left:1265px;top:69.500px;width:15px;height:10.500px;background:linear-gradient(#5f8fd2 0,#5f8fd2 1px,#b9d3f3 1px,#a5c5ee 3px,#4f80c8 3.600px,#4f80c8 4.800px,#c2d9f5 4.800px,#a9c8ef 7px,#4f80c8 7.600px,#4f80c8 8.800px,#bcd5f4 8.800px,#9fc0ea 10.500px);border-left:1px solid #3f6eb6"></div>
<div style="left:1265.500px;top:646.500px;width:15px;height:42.500px;border-radius:4px 0 0 4px;background:linear-gradient(#fdfdfd,#ececec);border:1px solid #b4b4b4;border-right:none;box-sizing:border-box"></div>
<div style="left:1266px;top:660.500px;width:14px;height:1px;background:#c6c6c6"></div><div style="left:1266px;top:674.500px;width:14px;height:1px;background:#c6c6c6"></div>
<svg style="left:1265px;top:646px" width="15" height="43" viewBox="1265 646 15 43">
<g fill="#161616"><path d="M1269.800 653.800l3.200-2.900 3.200 2.900zM1269.800 658l3.200-2.900 3.200 2.900z"/>
<path d="M1269.800 678.600l3.200 2.900 3.200-2.900zM1269.800 682.800l3.200 2.900 3.200-2.900z"/></g>
<ellipse cx="1273" cy="668" rx="3.400" ry="3" fill="#f4f4f4" stroke="#4a4a4a" stroke-width="1.100"/></svg>
<div style="left:0;top:689px;width:1280px;height:31px;background:#ebebeb"></div>
<div style="left:177px;top:689px;width:1088px;height:14px;background:linear-gradient(#eef1f6 0,#f7f8fa 2px,#fdfdfd 5px,#fbfbfb 8px,#f1f1f1 11px,#efefef 14px)"></div>
<div style="left:1265px;top:689px;width:15px;height:14px;background:#ececec"></div>
<div style="left:176px;top:689px;width:1px;height:31px;background:#dcdcdc"></div>
<div style="left:0;top:689px;width:177px;height:2px;background:linear-gradient(#f6f7fa,#ebebeb)"></div>
<div style="left:177px;top:703px;width:1103px;height:1px;background:#9d9d9d"></div>
<div style="left:177px;top:704px;width:1103px;height:16px;background:linear-gradient(#f4f4f4 0,#ebebeb 4px,#e2e2e2 9px,#e6e6e6 12px,#eeeeee 16px)"></div>
<div style="left:297.0px;top:704px;width:1px;height:16px;background:#8c8c8c;box-shadow:1px 0 0 #fafafa"></div>
<div style="left:346.0px;top:704px;width:1px;height:16px;background:#8c8c8c;box-shadow:1px 0 0 #fafafa"></div>
<div style="left:465.0px;top:704px;width:1px;height:16px;background:#8c8c8c;box-shadow:1px 0 0 #fafafa"></div>
<div style="left:600.0px;top:704px;width:1px;height:16px;background:#8c8c8c;box-shadow:1px 0 0 #fafafa"></div>
<div style="left:640.0px;top:704px;width:1px;height:16px;background:#8c8c8c;box-shadow:1px 0 0 #fafafa"></div>
<span class="t" style="left:181.2px;top:707.70px;font:400 10.6px/10.6px 'Liberation Sans',sans-serif;color:#1d1d1d;letter-spacing:-0.012px;transform:scale(1.03,0.9255);">Print Layout View</span>
<span class="t" style="left:303px;top:707.70px;font:400 10.6px/10.6px 'Liberation Sans',sans-serif;color:#1d1d1d;letter-spacing:-0.587px;transform:scale(1.03,0.9255);">Sec</span>
<span class="t" style="left:335.3px;top:707.70px;font:400 10.6px/10.6px 'Liberation Sans',sans-serif;color:#1d1d1d;transform:scale(1.03,0.9255);">1</span>
<span class="t" style="left:355px;top:707.70px;font:400 10.6px/10.6px 'Liberation Sans',sans-serif;color:#1d1d1d;letter-spacing:-0.319px;transform:scale(1.03,0.9255);">Pages:</span>
<span class="t" style="left:409.2px;top:707.70px;font:400 10.6px/10.6px 'Liberation Sans',sans-serif;color:#1d1d1d;letter-spacing:0.403px;transform:scale(1.03,0.9255);">1 of 1</span>
<span class="t" style="left:475px;top:707.70px;font:400 10.6px/10.6px 'Liberation Sans',sans-serif;color:#1d1d1d;letter-spacing:-0.220px;transform:scale(1.03,0.9255);">Words:</span>
<span class="t" style="left:537.2px;top:707.70px;font:400 10.6px/10.6px 'Liberation Sans',sans-serif;color:#1d1d1d;letter-spacing:0.645px;transform:scale(1.03,0.9255);">3 of 4</span>
<svg style="left:608px;top:704px" width="28" height="16" viewBox="608 704 28 16">
<path d="M612.600 708.400q4-1.400 8.400.4 4-1.800 8 -.4v8.600q-4-1.200-8 .5-4.400-1.700-8.400-.5z" fill="#f4f1ee" stroke="#4f1a14" stroke-width="1"/>
<path d="M612.300 717.200q4.400-1.300 8.700.5 4.100-1.800 8.300-.5" fill="none" stroke="#6e1610" stroke-width="1.400"/>
<path d="M621 708.800v8.400" stroke="#a9a29c" stroke-width=".7"/>
<path d="M614.600 711q2-.6 4.400 0M614.600 713.400q2-.6 4.400 0" stroke="#b9b9b9" stroke-width=".7" fill="none"/>
<circle cx="628.200" cy="709.600" r="4.300" fill="#3fae49" stroke="#2b8a36" stroke-width=".6"/>
<path d="M625.900 709.700l1.700 1.800 3-3.700" fill="none" stroke="#fff" stroke-width="1.400"/></svg>
<span class="t" style="left:1111.3px;top:708.10px;font:400 10.6px/10.6px 'Liberation Sans',sans-serif;color:#1d1d1d;letter-spacing:-0.224px;transform:scale(1.03,0.9255);">100%</span>
<div style="left:1151px;top:709.500px;width:100px;height:3.500px;border-radius:2px;background:linear-gradient(#9b9b9b,#c4c4c4);box-shadow:0 1px 0 #fafafa"></div>
<div style="left:1196px;top:706.500px;width:10px;height:10px;border-radius:5px;background:radial-gradient(circle at 50% 40%,#ffffff 0,#e4e4e4 55%,#bdbdbd 100%);box-shadow:0 0 0 .8px #8a8a8a"></div>
<div style="left:1199.700px;top:710.200px;width:2.600px;height:2.600px;border-radius:2px;background:#7e7e7e"></div>
<svg style="left:1264px;top:704px" width="16" height="16" viewBox="0 0 16 16"><g stroke="#8e8e8e" stroke-width="1"><path d="M3.500 15.500l12-12M7.500 15.500l8-8M11.500 15.500l4-4"/></g><g stroke="#fbfbfb" stroke-width="1"><path d="M4.500 15.500l11-11M8.500 15.500l7-7M12.500 15.500l3-3"/></g></svg>
<div style="left:2.500px;top:694px;width:170px;height:22px;box-sizing:border-box;border:1px solid #6e6e6e;border-radius:3.500px;background:linear-gradient(#ffffff 0,#f6f6f6 45%,#e9e9e9 55%,#f1f1f1 100%);box-shadow:0 1px 0 rgba(255,255,255,.8)"></div>
<div style="left:87.200px;top:694px;width:28.800px;height:22px;background:linear-gradient(#2f2a2a 0,#5c5757 14%,#6d6969 50%,#5e5a5a 100%)"></div>
<div style="left:30.9px;top:695px;width:1px;height:20px;background:#4e4e4e"></div>
<div style="left:58.7px;top:695px;width:1px;height:20px;background:#4e4e4e"></div>
<div style="left:86.7px;top:695px;width:1px;height:20px;background:#4e4e4e"></div>
<div style="left:115.5px;top:695px;width:1px;height:20px;background:#4e4e4e"></div>
<div style="left:143.0px;top:695px;width:1px;height:20px;background:#4e4e4e"></div>
<svg style="left:0;top:692px" width="178" height="26" viewBox="0 692 178 26">
<g stroke="#1c1c1c" stroke-width="1.500"><path d="M11 700.500h13.500M11 704.600h13.500M11 708.700h13.500"/></g>
<g stroke="#1c1c1c" stroke-width="1.500"><path d="M37 700.500h3M42 700.500h7.500M39 704.600h3M44 704.600h8M41 708.700h3M46 708.700h8"/></g>
<rect x="65.300" y="700" width="16.400" height="9.600" rx="1.200" fill="#262626"/><path d="M67.600 702v5.600M79.400 702v5.600M67.600 702.300h2.400M77 702.300h2.400M67.600 707.300h2.400M77 707.300h2.400" stroke="#e6e6e6" stroke-width=".9" fill="none"/>
<path d="M71.300 700.800v7l1.800-1.500 1.200 2.500 1.300-.6-1.200-2.400h2.400z" fill="#fff" stroke="#111" stroke-width=".5"/>
<defs><linearGradient id="sel" x1="0" y1="0" x2="0" y2="1"><stop offset="0" stop-color="#8fd0fb"/><stop offset=".5" stop-color="#4aa6ee"/><stop offset="1" stop-color="#78c4fa"/></linearGradient></defs>
<rect x="93" y="699.600" width="17" height="10.800" rx="1.800" fill="url(#sel)" stroke="#2a7fd0" stroke-width=".7"/>
<path d="M95.200 703.200h12.600M95.200 706.800h12.600" stroke="#1f66b6" stroke-width="1.400"/>
<rect x="121.600" y="700" width="16" height="10" rx="1.500" fill="#222"/><path d="M122.400 703.300h14.400M122.400 706.600h14.400" stroke="#ededed" stroke-width=".9"/><path d="M125 700.400v9.200" stroke="#ededed" stroke-width=".8"/><path d="M137.800 701.600v1.200M137.800 704.400v1.200M137.800 707.200v1.200" stroke="#222" stroke-width="1.400"/>
<rect x="150.200" y="700" width="15.600" height="9.800" rx="1.300" fill="#2a2a2a"/>
<g stroke="#f2f2f2" stroke-width="1" fill="none"><path d="M152.600 702l3.400 2.800M152.300 704.400v-2.700h2.900"/><path d="M163.400 707.800l-3.400-2.800M163.700 705.400v2.700h-2.900"/></g>
</svg>
</div>
</body></html>
